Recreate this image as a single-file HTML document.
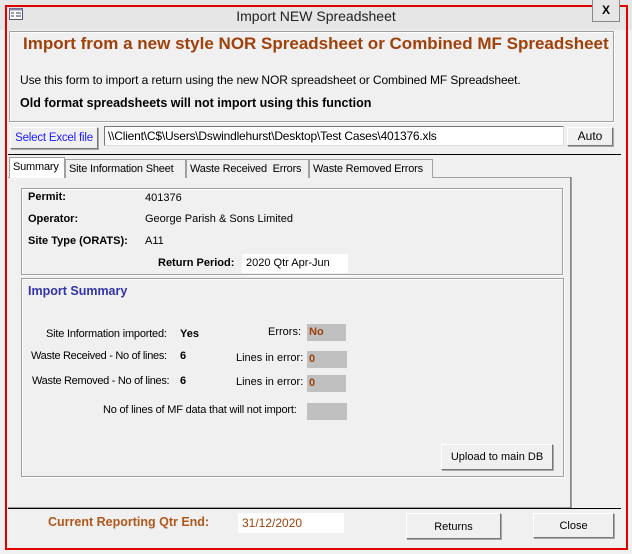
<!DOCTYPE html>
<html><head><meta charset="utf-8"><style>
*{box-sizing:border-box;margin:0;padding:0}
body{width:632px;height:554px;background:#f0f0f0;font-family:"Liberation Sans",sans-serif;font-size:11px;color:#000;position:relative;overflow:hidden}
.a{position:absolute;white-space:nowrap}
.btn{position:absolute;white-space:nowrap;background:#f0f0f0;border:1px solid #fff;border-right-color:#777;border-bottom-color:#777;box-shadow:1px 1px 0 #aaa;text-align:center;font-size:11px}
.box{position:absolute;border:1px solid #a0a0a0;box-shadow:inset 1px 1px 0 #fff,1px 1px 0 #fff}
.g{position:absolute;background:#c0c0c0;color:#a0400a;font-weight:bold;padding:2px 2px;font-size:11px}
b{font-weight:bold}
.tab{position:absolute;white-space:nowrap;overflow:hidden;top:159px;height:19px;border:1px solid #a0a0a0;border-bottom:none;padding:3px 3px;font-size:11px;letter-spacing:-0.2px;background:#f0f0f0}
</style></head><body>
<div class="a" style="left:0;top:0;width:632px;height:30px;background:#e6e6e6"></div>
<div class="a" style="left:5px;top:5px;width:623px;height:545px;border:2px solid #e00000"></div>
<svg class="a" style="left:9px;top:8px" width="14" height="12"><rect x="0.5" y="0.5" width="13" height="11" fill="#fff" stroke="#557"/><rect x="0.5" y="0.5" width="13" height="2" fill="#88a"/><path d="M2 5h3M2 8h3M7 5h5M7 8h5" stroke="#336" stroke-width="1"/></svg>
<div class="a" style="left:0;width:632px;top:8px;text-align:center;font-size:14px;color:#222">Import NEW Spreadsheet</div>
<div class="a" style="left:592px;top:0;width:28px;height:22px;border:1px solid #888;border-top:none;background:#e6e6e6;text-align:center;font-weight:bold;font-size:12px;line-height:20px">X</div>
<div class="box" style="left:9px;top:31px;width:605px;height:91px"></div>
<div class="a" style="left:23px;top:34px;font-size:17px;font-weight:bold;color:#a0400a">Import from a new style NOR Spreadsheet or Combined MF Spreadsheet</div>
<div class="a" style="left:20px;top:73px;font-size:12px;letter-spacing:-0.1px">Use this form to import a return using the new NOR spreadsheet or Combined MF Spreadsheet.</div>
<div class="a" style="left:20px;top:96px;font-size:12.5px;font-weight:bold">Old format spreadsheets will not import using this function</div>
<div class="btn" style="left:10px;top:127px;width:88px;height:22px;line-height:20px;color:#1a1aff;font-size:11.5px;letter-spacing:-0.2px">Select Excel file</div>
<div class="a" style="left:104px;top:126px;width:460px;height:20px;background:#fff;border:1px solid #777;border-right-color:#ddd;border-bottom-color:#ddd;padding:2px 3px;font-size:12px;letter-spacing:-0.2px">\\Client\C$\Users\Dswindlehurst\Desktop\Test Cases\401376.xls</div>
<div class="btn" style="left:567px;top:127px;width:46px;height:19px;line-height:17px;font-size:12px">Auto</div>
<div class="a" style="left:8px;top:154px;width:613px;height:1px;background:#000"></div>
<div class="a" style="left:8px;top:177px;width:564px;height:331px;border:1px solid #a0a0a0;border-left:none"></div>
<div class="a" style="left:570px;top:177px;width:1px;height:331px;background:#888"></div>
<div class="tab" style="left:9px;top:157px;height:21px;width:56px;background:#fff;z-index:2">Summary</div>
<div class="tab" style="left:65px;width:121px">Site Information Sheet</div>
<div class="tab" style="left:186px;width:123px">Waste Received &nbsp;Errors</div>
<div class="tab" style="left:309px;width:124px">Waste Removed Errors</div>
<div class="box" style="left:21px;top:188px;width:542px;height:87px"></div>
<div class="a" style="left:28px;top:191px"><b>Permit:</b></div>
<div class="a" style="left:145px;top:192px">401376</div>
<div class="a" style="left:28px;top:213px"><b>Operator:</b></div>
<div class="a" style="left:145px;top:213px">George Parish &amp; Sons Limited</div>
<div class="a" style="left:28px;top:235px"><b>Site Type (ORATS):</b></div>
<div class="a" style="left:145px;top:235px">A11</div>
<div class="a" style="left:158px;top:257px"><b>Return Period:</b></div>
<div class="a" style="left:242px;top:254px;width:106px;height:19px;background:#fff;padding:3px 4px">2020 Qtr Apr-Jun</div>
<div class="box" style="left:21px;top:278px;width:543px;height:199px"></div>
<div class="a" style="left:28px;top:284px;font-size:12.5px;font-weight:bold;color:#3333aa">Import Summary</div>
<div class="a" style="left:46px;top:328px;letter-spacing:-0.2px">Site Information imported:</div>
<div class="a" style="left:180px;top:328px"><b>Yes</b></div>
<div class="a" style="left:268px;top:326px">Errors:</div>
<div class="g" style="left:307px;top:324px;width:39px;height:17px">No</div>
<div class="a" style="left:31px;top:350px;letter-spacing:-0.3px">Waste Received - No of lines:</div>
<div class="a" style="left:180px;top:350px"><b>6</b></div>
<div class="a" style="left:236px;top:352px">Lines in error:</div>
<div class="g" style="left:307px;top:351px;width:40px;height:17px">0</div>
<div class="a" style="left:32px;top:375px;letter-spacing:-0.3px">Waste Removed - No of lines:</div>
<div class="a" style="left:180px;top:375px"><b>6</b></div>
<div class="a" style="left:236px;top:376px">Lines in error:</div>
<div class="g" style="left:307px;top:375px;width:39px;height:17px">0</div>
<div class="a" style="left:103px;top:404px;letter-spacing:-0.2px">No of lines of MF data that will not import:</div>
<div class="g" style="left:307px;top:403px;width:40px;height:17px"></div>
<div class="btn" style="left:441px;top:444px;width:112px;height:26px;line-height:24px">Upload to main DB</div>
<div class="a" style="left:8px;top:508px;width:613px;height:1px;background:#000"></div>
<div class="a" style="left:48px;top:515px;font-size:12.5px;font-weight:bold;color:#b0581a">Current Reporting Qtr End:</div>
<div class="a" style="left:238px;top:513px;width:106px;height:20px;background:#fff;padding:3px 4px;color:#a0400a;font-size:12px">31/12/2020</div>
<div class="btn" style="left:406px;top:513px;width:95px;height:26px;line-height:26px">Returns</div>
<div class="btn" style="left:533px;top:513px;width:81px;height:25px;line-height:24px">Close</div>
</body></html>
